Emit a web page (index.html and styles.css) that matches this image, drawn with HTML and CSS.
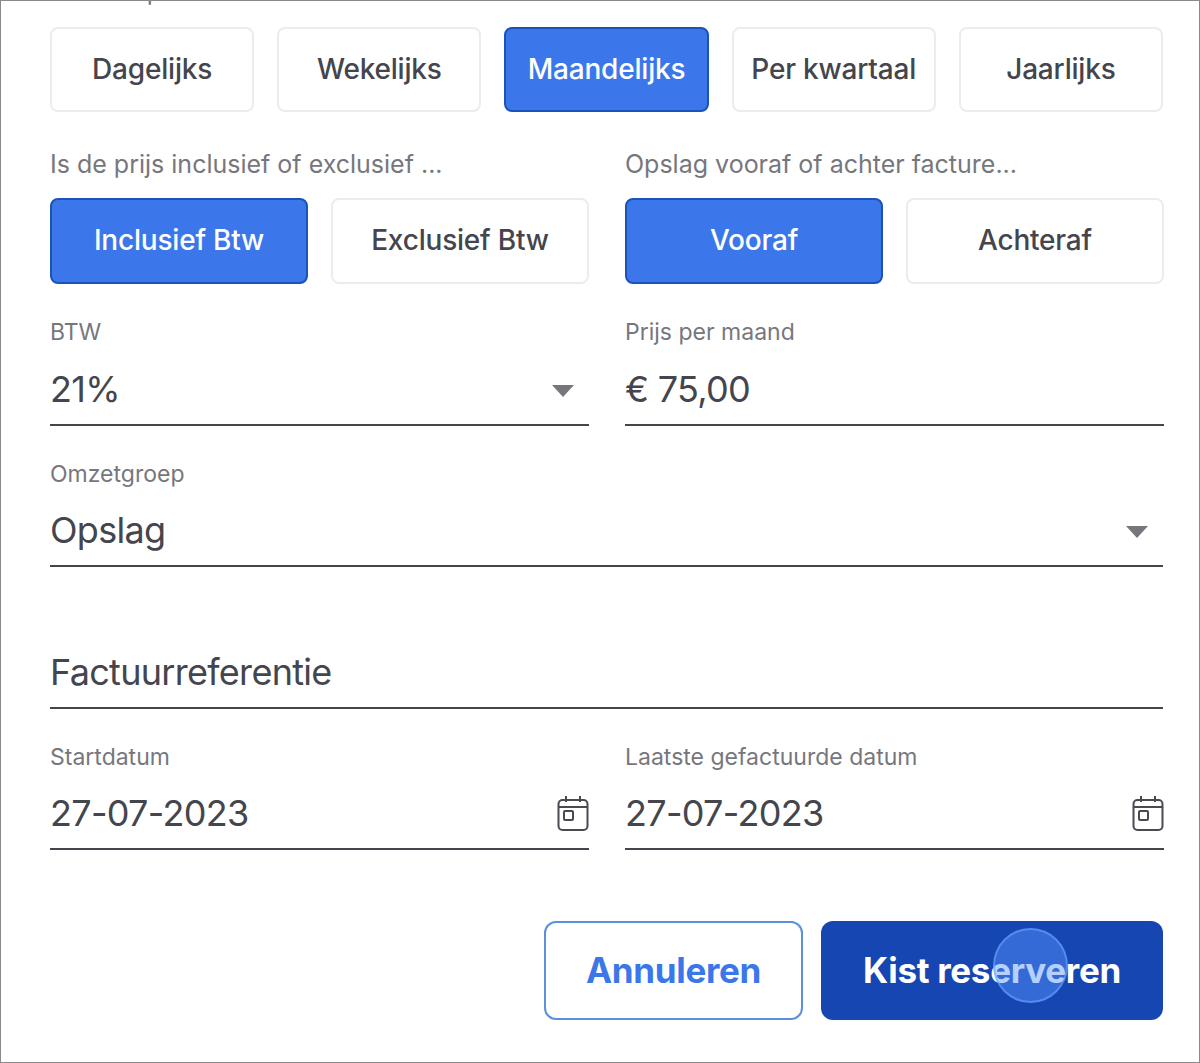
FILE: index.html

```html
<!DOCTYPE html>
<html lang="nl">
<head>
    <meta charset="UTF-8">
    <meta name="viewport" content="width=device-width, initial-scale=1.0">
    <title>Kist reserveren</title>
    <link rel="stylesheet" href="styles.css">
</head>
<body>
    <div class="frame">
        <form class="form">
            <div class="top-label">Factuur periode</div>
            <div class="period-row">
                <button type="button" class="choice">Dagelijks</button>
                <button type="button" class="choice">Wekelijks</button>
                <button type="button" class="choice active">Maandelijks</button>
                <button type="button" class="choice">Per kwartaal</button>
                <button type="button" class="choice">Jaarlijks</button>
            </div>

            <div class="two-col choice-col">
                <div>
                    <div class="choice-label">Is de prijs inclusief of exclusief ...</div>
                    <div class="pair">
                        <button type="button" class="choice tall active">Inclusief Btw</button>
                        <button type="button" class="choice tall">Exclusief Btw</button>
                    </div>
                </div>
                <div>
                    <div class="choice-label">Opslag vooraf of achter facture...</div>
                    <div class="pair">
                        <button type="button" class="choice tall active">Vooraf</button>
                        <button type="button" class="choice tall">Achteraf</button>
                    </div>
                </div>
            </div>

            <div class="two-col">
                <div class="field">
                    <div class="field-label">BTW</div>
                    <div class="field-value">21%<span class="caret"></span></div>
                </div>
                <div class="field">
                    <div class="field-label">Prijs per maand</div>
                    <div class="field-value">€ 75,00</div>
                </div>
            </div>

            <div class="field">
                <div class="field-label">Omzetgroep</div>
                <div class="field-value">Opslag<span class="caret"></span></div>
            </div>

            <div class="field">
                <div class="field-label"></div>
                <div class="field-value">Factuurreferentie</div>
            </div>

            <div class="two-col">
                <div class="field">
                    <div class="field-label">Startdatum</div>
                    <div class="field-value">27-07-2023
                        <svg class="cal" viewBox="0 0 32 36" fill="none" stroke="#4a4b52" stroke-width="2"><path d="M9 1v6M23 1v6"/><rect x="1.5" y="5" width="29" height="30" rx="4"/><path d="M1.5 12h29"/><rect x="7" y="16" width="9" height="9" rx="1"/></svg>
                    </div>
                </div>
                <div class="field">
                    <div class="field-label">Laatste gefactuurde datum</div>
                    <div class="field-value">27-07-2023
                        <svg class="cal" viewBox="0 0 32 36" fill="none" stroke="#4a4b52" stroke-width="2"><path d="M9 1v6M23 1v6"/><rect x="1.5" y="5" width="29" height="30" rx="4"/><path d="M1.5 12h29"/><rect x="7" y="16" width="9" height="9" rx="1"/></svg>
                    </div>
                </div>
            </div>

            <div class="actions">
                <button type="button" class="btn-cancel">Annuleren</button>
                <button type="button" class="btn-submit">Kist reserveren<span class="touch"></span></button>
            </div>
        </form>
    </div>
</body>
</html>
```

FILE: styles.css

```css
* {
    box-sizing: border-box;
}

html, body {
    margin: 0;
    padding: 0;
    height: 100%;
    background-color: #fff;
}

body {
    font-family: Inter, "Noto Sans", sans-serif;
    color: #44454d;
}

.frame {
    height: 1063px;
    border: 1px solid #8a8a8a;
    overflow: hidden;
}

.form {
    margin-top: -23px;
    padding: 0 36px 0 49px;
}

.top-label {
    height: 26px;
    font-size: 25px;
    line-height: 26px;
    color: #76777d;
}

.period-row {
    display: flex;
    gap: 23px;
    margin-top: 23px;
}

.period-row .choice {
    flex: 1;
    height: 85px;
}

.choice {
    font-family: inherit;
    font-size: 28px;
    font-weight: 500;
    letter-spacing: -0.2px;
    color: #44454d;
    background-color: #fff;
    border: 2px solid #ececee;
    border-radius: 8px;
    padding: 0 0 2px;
}

.choice.active {
    color: #fff;
    background-color: #3b77ea;
    border: 2px solid #1c53b8;
}

.two-col {
    display: grid;
    grid-template-columns: 539px 539px;
    gap: 36px;
}

.choice-col {
    margin-top: 37px;
}

.choice-label {
    font-size: 25px;
    line-height: 30px;
    color: #76777d;
}

.pair {
    display: grid;
    grid-template-columns: 258px 258px;
    gap: 23px;
    margin-top: 19px;
}

.choice.tall {
    height: 86px;
}

.field {
    border-bottom: 2px solid #44454d;
    margin-top: 33px;
    height: 108.5px;
}

.field-label {
    height: 30px;
    font-size: 23px;
    line-height: 30px;
    color: #76777d;
}

.field-value {
    display: flex;
    align-items: center;
    justify-content: space-between;
    height: 76px;
    padding-top: 7px;
    font-size: 36px;
    letter-spacing: -0.7px;
    color: #44454d;
}

.caret {
    width: 0;
    height: 0;
    margin: 4px 15px 0 0;
    border-left: 11px solid transparent;
    border-right: 11px solid transparent;
    border-top: 12px solid #76777d;
}

.cal {
    width: 32px;
    height: 36px;
}

.actions {
    display: flex;
    justify-content: flex-end;
    gap: 18px;
    margin-top: 71px;
}

.actions button {
    height: 99px;
    padding: 0 0 2px;
    font-family: inherit;
    font-size: 35px;
    font-weight: 700;
    letter-spacing: -0.3px;
    border-radius: 12px;
}

.btn-cancel {
    width: 259px;
    color: #3b77ea;
    background-color: #fff;
    border: 2px solid #5c8fdc;
}

.btn-submit {
    position: relative;
    width: 342px;
    color: #fff;
    background-color: #1546b2;
    border: none;
}

.touch {
    position: absolute;
    left: 172px;
    top: 7px;
    width: 75px;
    height: 75px;
    border-radius: 50%;
    background-color: rgba(90, 150, 255, 0.45);
    border: 2px solid rgba(110, 160, 255, 0.6);
}
```
